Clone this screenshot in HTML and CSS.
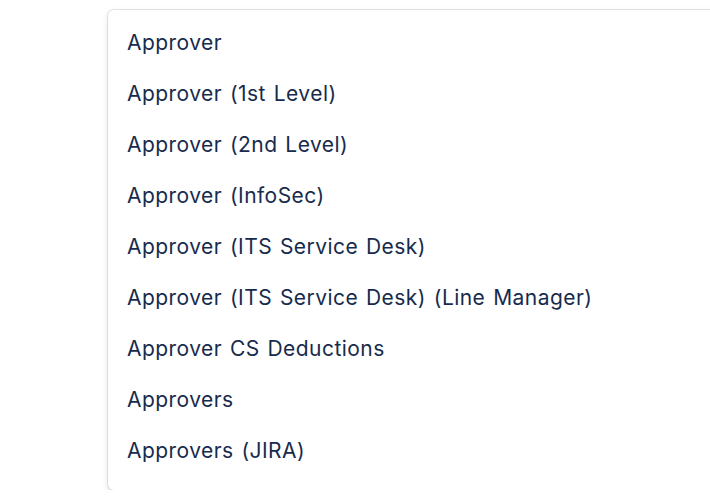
FILE: index.html
```html
<!DOCTYPE html>
<html lang="en">
<head>
    <meta charset="UTF-8">
    <meta name="viewport" content="width=device-width, initial-scale=1.0">
    <title>Approver fields</title>
    <link rel="stylesheet" href="styles.css">
</head>
<body>

<!-- field picker dropdown -->
<div class="menu">
    <div class="menu-item">Approver</div>
    <div class="menu-item">Approver (1st Level)</div>
    <div class="menu-item">Approver (2nd Level)</div>
    <div class="menu-item">Approver (InfoSec)</div>
    <div class="menu-item">Approver (ITS Service Desk)</div>
    <div class="menu-item">Approver (ITS Service Desk) (Line Manager)</div>
    <div class="menu-item">Approver CS Deductions</div>
    <div class="menu-item">Approvers</div>
    <div class="menu-item">Approvers (JIRA)</div>
</div>

</body>
</html>
```

FILE: styles.css
```css
body {
    margin: 0;
    background: #ffffff;
    font-family: Inter, "Noto Sans", sans-serif;
    overflow: hidden;
}

.menu {
    margin: 10px 0 0 108px;
    width: 640px;
    padding: 7px 0 14px;
    background: #ffffff;
    border-radius: 6px;
    box-shadow: 0 0 0 1px rgba(9, 30, 66, 0.1), 0 2px 6px rgba(9, 30, 66, 0.12);
}

.menu-item {
    height: 51px;
    line-height: 51px;
    padding-left: 19px;
    font-size: 21px;
    letter-spacing: 0.45px;
    word-spacing: 1.5px;
    color: #172b4d;
    white-space: nowrap;
}
```
